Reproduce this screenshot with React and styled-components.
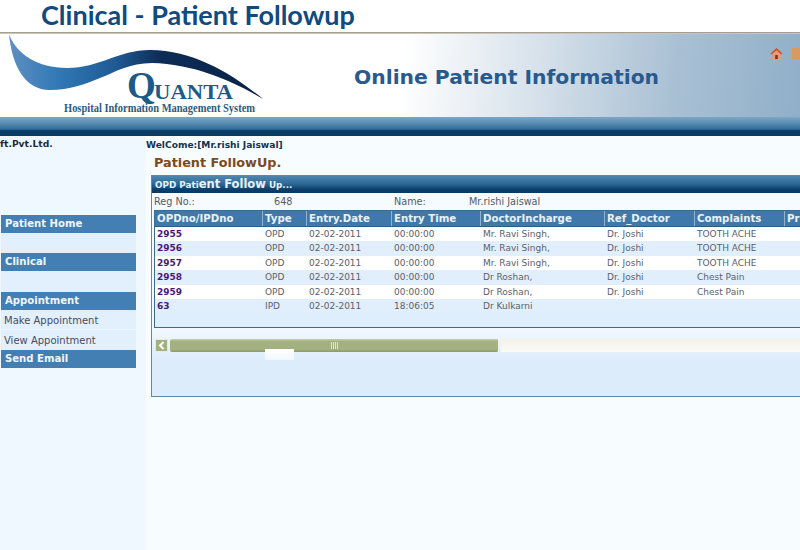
import React from 'react';
import styled, { createGlobalStyle } from 'styled-components';

const GlobalStyle = createGlobalStyle`
  html, body {
    margin: 0;
    padding: 0;
    background: #fff;
  }
`;

const Page = styled.div`
  width: 800px;
  height: 550px;
  overflow: hidden;
  display: flex;
  flex-direction: column;
  font-family: 'DejaVu Sans', Verdana, sans-serif;
`;

const SlideTitle = styled.h1`
  height: 33px;
  margin: 0;
  padding-left: 41px;
  box-sizing: border-box;
  font-family: Lato, 'Open Sans', sans-serif;
  font-size: 27px;
  font-weight: 700;
  line-height: 30px;
  color: #0f4a80;
  background: #fff;
  border-bottom: 1px solid #a59f92;
  flex: none;
`;

const Banner = styled.header`
  height: 84px;
  flex: none;
  display: flex;
  border-top: 1px solid #c9c5bb;
  box-sizing: border-box;
  background: linear-gradient(96deg, #fff 0%, #fff 50%, #d9e3ec 66%, #a9c0d4 84%, #90afc9 100%);
`;

const LogoArt = styled.svg`
  width: 270px;
  height: 84px;
  flex: none;
  display: block;
`;

const BannerHeading = styled.h2`
  margin: 28px 0 0 84px;
  flex: none;
  width: 308px;
  font-size: 20.3px;
  font-weight: 700;
  line-height: 30px;
  white-space: nowrap;
  color: #295a8e;
`;

const IconRow = styled.div`
  flex: none;
  display: flex;
  gap: 9px;
  margin: 13px 0 0 108px;
`;

const NavStrip = styled.div`
  height: 19px;
  flex: none;
  background: linear-gradient(#7ea5c4 0, #5d8fb4 30%, #2f6b98 65%, #0a3f68 70%, #0b3a60 100%);
`;

const Body = styled.div`
  flex: 1;
  display: flex;
  min-height: 0;
`;

const Sidebar = styled.aside`
  width: 146px;
  flex: none;
  background: #eff8ff;
`;

const Company = styled.div`
  height: 79px;
  padding-top: 2px;
  box-sizing: border-box;
  font-size: 9.2px;
  font-weight: 700;
  line-height: 11px;
  color: #1c2c3c;
`;

const Menu = styled.nav`
  width: 135px;
  margin-left: 1px;
  background: #e2f0fe;
  display: flex;
  flex-direction: column;
`;

const MenuHead = styled.div`
  height: 18px;
  margin-bottom: ${(p) => p.$gap || 0}px;
  padding-left: 4px;
  font-size: 10.1px;
  font-weight: 700;
  line-height: 18px;
  color: #f1f6fb;
  background: #437fb2;
`;

const MenuLink = styled.a`
  height: 20px;
  padding-left: 3px;
  font-size: 10px;
  line-height: 21px;
  color: #4a4a5e;
  border-bottom: ${(p) => (p.$last ? 'none' : '1px solid #f2f8ff')};
  box-sizing: border-box;
`;

const Main = styled.main`
  flex: 1;
  min-width: 0;
  background: #f7fcff;
`;

const Welcome = styled.div`
  height: 13px;
  padding-top: 4px;
  font-size: 9.1px;
  font-weight: 700;
  line-height: 11px;
  white-space: nowrap;
  color: #13324e;
`;

const PageTitle = styled.h3`
  height: 22px;
  margin: 0;
  padding-left: 8px;
  font-size: 12.8px;
  font-weight: 700;
  line-height: 19px;
  white-space: nowrap;
  color: #7c4a1c;
`;

const Panel = styled.section`
  position: relative;
  margin-left: 5px;
  width: 660px;
  height: 222px;
  box-sizing: border-box;
  border: 1px solid #5f87a8;
  background: linear-gradient(#f6fbff 0, #f3f9ff 68%, #dcecfb 85%, #dcecfb 100%);
  overflow: hidden;
`;

const PanelTitle = styled.div`
  height: 17px;
  padding-left: 3px;
  line-height: 17px;
  font-size: 8.8px;
  font-weight: 700;
  white-space: nowrap;
  color: #e9f1f8;
  background: linear-gradient(#4f86ae 0, #2e6a98 45%, #0a3e68 80%, #0c3a60 100%);

  b {
    font-size: 11.5px;
  }
`;

const InfoRow = styled.div`
  height: 17px;
  display: grid;
  grid-template-columns: 120px 120px 75px 1fr;
  padding-left: 2px;
  font-size: 9.7px;
  line-height: 17px;
  color: #565a62;
`;

const Grid = styled.div`
  margin-left: 2px;
  height: 118px;
  box-sizing: border-box;
  border: 1px solid #3a6b90;
  border-right: none;
  background: #dfeefd;
`;

const COLS = '108px 44px 85px 89px 124px 90px 90px 60px';

const HeadRow = styled.div`
  display: grid;
  grid-template-columns: ${COLS};
  height: 15px;
  background: #3f79ab;
  border-bottom: 1px solid #2c5e85;
`;

const HeadCell = styled.div`
  padding-left: 2px;
  font-size: 10.2px;
  font-weight: 700;
  line-height: 15px;
  white-space: nowrap;
  overflow: hidden;
  color: #eaf2f9;
  border-right: 1px solid #8fb3d0;
`;

const DataRow = styled.div`
  display: grid;
  grid-template-columns: ${COLS};
  height: 14.4px;
  background: ${(p) => (p.$odd ? '#e1effd' : '#fff')};
`;

const Cell = styled.div`
  padding-left: 2px;
  font-size: 9px;
  line-height: 14.4px;
  white-space: nowrap;
  color: #5c6069;
`;

const IdCell = styled(Cell)`
  font-weight: 700;
  color: #47187a;
`;

const ScrollBar = styled.div`
  display: flex;
  height: 14px;
  margin: 11px 0 0 3px;
  gap: 2px;
`;

const ScrollButton = styled.div`
  width: 13px;
  height: 13px;
  background: #a3b07f;
  border: 1px solid #e6ead8;
  box-sizing: border-box;
  display: flex;
  align-items: center;
  justify-content: center;
`;

const ScrollThumb = styled.div`
  width: 329px;
  height: 13px;
  box-sizing: border-box;
  background: linear-gradient(#c6cfae 0, #a3b07f 20%, #a3b07f 80%, #8b9869 100%);
  border-radius: 2px;
  border-right: 1px solid #eef1e4;
  display: flex;
  align-items: center;
  justify-content: center;
`;

const Grip = styled.span`
  width: 7px;
  height: 7px;
  background: repeating-linear-gradient(90deg, #dfe5cf 0 1px, transparent 1px 2px);
`;

const ScrollTrack = styled.div`
  flex: 1;
  height: 13px;
  background: linear-gradient(#f3f1e8, #fbfaf5);
`;

const ScrollTab = styled.div`
  position: absolute;
  left: 113px;
  top: 173px;
  width: 29px;
  height: 11px;
  background: linear-gradient(#fff, #f1f7fd);
`;

const rows = [
  ['2955', 'OPD', '02-02-2011', '00:00:00', 'Mr. Ravi Singh,', 'Dr. Joshi', 'TOOTH ACHE'],
  ['2956', 'OPD', '02-02-2011', '00:00:00', 'Mr. Ravi Singh,', 'Dr. Joshi', 'TOOTH ACHE'],
  ['2957', 'OPD', '02-02-2011', '00:00:00', 'Mr. Ravi Singh,', 'Dr. Joshi', 'TOOTH ACHE'],
  ['2958', 'OPD', '02-02-2011', '00:00:00', 'Dr Roshan,', 'Dr. Joshi', 'Chest Pain'],
  ['2959', 'OPD', '02-02-2011', '00:00:00', 'Dr Roshan,', 'Dr. Joshi', 'Chest Pain'],
  ['63', 'IPD', '02-02-2011', '18:06:05', 'Dr Kulkarni', '', ''],
];

const heads = ['OPDno/IPDno', 'Type', 'Entry.Date', 'Entry Time', 'DoctorIncharge', 'Ref_Doctor', 'Complaints', 'Pr'];

const Logo = () => (
  <LogoArt viewBox="0 0 270 84">
    <defs>
      <linearGradient id="swoosh" x1="0" x2="1" y1="0" y2="0">
        <stop offset="0" stopColor="#5f8fc2" />
        <stop offset="0.2" stopColor="#2f78b5" />
        <stop offset="0.42" stopColor="#1f5a94" />
        <stop offset="0.6" stopColor="#0c2c56" />
        <stop offset="1" stopColor="#0b2347" />
      </linearGradient>
    </defs>
    <path
      d="M9 0 C16 20 38 34 67 34 C100 34 118 16 150 16 C195 16 235 42 263 65 C235 48 195 30 152 29 C130 29 115 38 100 44 C85 50 70 56 50 56 C25 56 12 32 9 0 Z"
      fill="url(#swoosh)"
    />
    <text x="127" y="64" fontFamily="'Liberation Serif', serif" fontSize="37" fontWeight="700" fill="#1c5a88">Q</text>
    <text x="154" y="65" fontFamily="'Liberation Serif', serif" fontSize="21" fontWeight="700" fill="#1c5a88" textLength="79" lengthAdjust="spacingAndGlyphs">UANTA</text>
    <text x="64" y="78" fontFamily="'Liberation Serif', serif" fontSize="12.5" fontWeight="700" fill="#2a5c80" textLength="191" lengthAdjust="spacingAndGlyphs">
      Hospital Information Management System
    </text>
  </LogoArt>
);

const HomeIcon = () => (
  <svg width="13" height="13" viewBox="0 0 13 13">
    <path d="M6.5 1 L12.5 6.5 L11 7.5 L6.5 3.4 L2 7.5 L.5 6.5 Z" fill="#d2512a" />
    <path d="M2.5 7 L6.5 3.6 L10.5 7 V12 H2.5 Z" fill="#ee9a6a" />
    <rect x="5.2" y="8" width="2.6" height="4" fill="#6e3a1e" />
  </svg>
);

const MailIcon = () => (
  <svg width="13" height="13" viewBox="0 0 13 13">
    <rect x="0" y="1" width="13" height="11" fill="#d99a62" />
  </svg>
);

const App = () => {
  return (
    <Page>
      <GlobalStyle />
      <SlideTitle>Clinical - Patient Followup</SlideTitle>
      <Banner>
        <Logo />
        <BannerHeading>Online Patient Information</BannerHeading>
        <IconRow>
          <HomeIcon />
          <MailIcon />
        </IconRow>
      </Banner>
      <NavStrip />
      <Body>
        <Sidebar>
          <Company>ft.Pvt.Ltd.</Company>
          <Menu>
            <MenuHead $gap={20}>Patient Home</MenuHead>
            <MenuHead $gap={21}>Clinical</MenuHead>
            <MenuHead>Appointment</MenuHead>
            <MenuLink>Make Appointment</MenuLink>
            <MenuLink $last>View Appointment</MenuLink>
            <MenuHead>Send Email</MenuHead>
          </Menu>
        </Sidebar>
        <Main>
          <Welcome>WelCome:[Mr.rishi Jaiswal]</Welcome>
          <PageTitle>Patient FollowUp.</PageTitle>
          <Panel>
            <PanelTitle>
              OPD Pati<b>ent Follow</b> Up...
            </PanelTitle>
            <InfoRow>
              <span>Reg No.:</span>
              <span>648</span>
              <span>Name:</span>
              <span>Mr.rishi Jaiswal</span>
            </InfoRow>
            <Grid>
              <HeadRow>
                {heads.map((h) => (
                  <HeadCell key={h}>{h}</HeadCell>
                ))}
              </HeadRow>
              {rows.map((row, i) => (
                <DataRow key={row[0]} $odd={i % 2 === 1}>
                  {row.map((val, j) =>
                    j === 0 ? <IdCell key={j}>{val}</IdCell> : <Cell key={j}>{val}</Cell>
                  )}
                </DataRow>
              ))}
            </Grid>
            <ScrollBar>
              <ScrollButton>
                <svg width="7" height="9" viewBox="0 0 7 9">
                  <path d="M5.5 1 L2 4.5 L5.5 8" fill="none" stroke="#fff" strokeWidth="2" />
                </svg>
              </ScrollButton>
              <ScrollThumb>
                <Grip />
              </ScrollThumb>
              <ScrollTrack />
            </ScrollBar>
            <ScrollTab />
          </Panel>
        </Main>
      </Body>
    </Page>
  );
};

export default App;
